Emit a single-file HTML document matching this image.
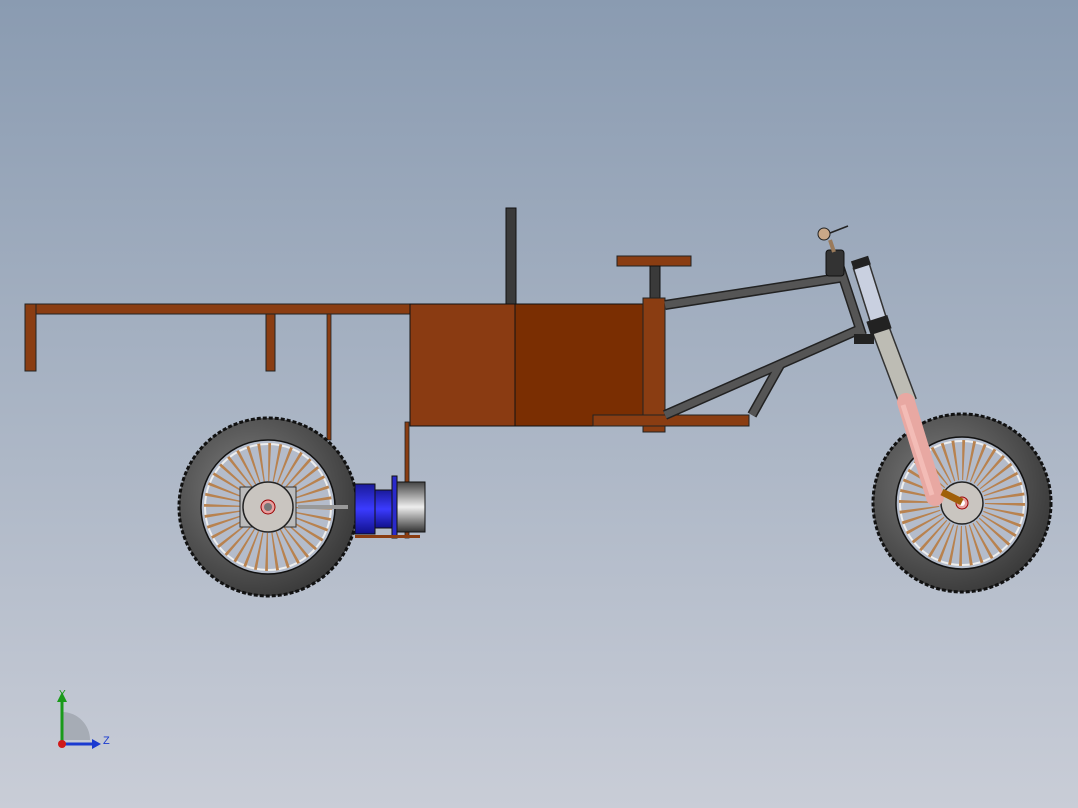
<!DOCTYPE html>
<html><head><meta charset="utf-8"><style>
html,body{margin:0;padding:0;width:1078px;height:808px;overflow:hidden}
body{background:linear-gradient(#8a9bb1 0%,#a9b4c4 50%,#c9cdd7 100%)}
svg{position:absolute;left:0;top:0}
</style></head><body>
<svg width="1078" height="808" viewBox="0 0 1078 808">
<defs>
<radialGradient id="tire" cx="0.4" cy="0.4" r="0.7"><stop offset="0" stop-color="#808080"/><stop offset="1" stop-color="#333"/></radialGradient>
<linearGradient id="blue" x1="0" x2="0" y1="0" y2="1"><stop offset="0" stop-color="#1a1a9a"/><stop offset="0.5" stop-color="#3b3bff"/><stop offset="1" stop-color="#10108a"/></linearGradient>
<linearGradient id="drum" x1="0" x2="0" y1="0" y2="1"><stop offset="0" stop-color="#444"/><stop offset="0.5" stop-color="#eee"/><stop offset="1" stop-color="#333"/></linearGradient>
</defs>

<rect x="25" y="304" width="386" height="10" fill="#8a3d12" stroke="#222" stroke-width="1"/>
<rect x="25" y="304" width="11" height="67" fill="#8a3d12" stroke="#222" stroke-width="1"/>
<rect x="266" y="314" width="9" height="57" fill="#8a3d12" stroke="#222" stroke-width="1"/>
<rect x="327" y="314" width="4" height="126" fill="#8a3d12" stroke="#222" stroke-width="0.8"/>
<rect x="506" y="208" width="10" height="96" fill="#3a3a3a" stroke="#111"/>
<rect x="410" y="304" width="105" height="122" fill="#8a3b12" stroke="#111"/>
<rect x="515" y="304" width="148" height="122" fill="#7a2e02" stroke="#111"/>
<rect x="405" y="422" width="4" height="116" fill="#8a3d12" stroke="#222" stroke-width="0.8"/>
<rect x="617" y="256" width="74" height="10" fill="#8a3d12" stroke="#222"/>
<rect x="650" y="266" width="10" height="34" fill="#3a3a3a" stroke="#111"/>
<rect x="643" y="298" width="22" height="134" fill="#8a3d12" stroke="#222"/>
<rect x="593" y="415" width="156" height="11" fill="#8a3d12" stroke="#222"/>

<g stroke="#222" stroke-width="10">
<line x1="665" y1="305" x2="845" y2="277"/>
<line x1="665" y1="415" x2="858" y2="330"/>
<line x1="752" y1="415" x2="780" y2="365"/>
<line x1="838" y1="262" x2="862" y2="335"/>
</g>
<g stroke="#555" stroke-width="7">
<line x1="665" y1="305" x2="845" y2="277"/>
<line x1="665" y1="415" x2="858" y2="330"/>
<line x1="752" y1="415" x2="780" y2="365"/>
<line x1="838" y1="262" x2="862" y2="335"/>
</g>

<g transform="translate(268,507)">
<circle r="89" fill="url(#tire)" stroke="#111" stroke-width="3" stroke-dasharray="4 2"/>
<circle r="67" fill="#b4bccb" stroke="#111" stroke-width="1.5"/>
<circle r="63" fill="none" stroke="#eee" stroke-width="2"/>
<circle r="45" fill="none" stroke="#b8824f" stroke-width="38" stroke-dasharray="2 5.85"/>
<rect x="-28" y="-20" width="56" height="40" fill="#bbb" stroke="#333"/>
<circle r="25" fill="#c9c5c0" stroke="#222" stroke-width="1.5"/>
<circle r="7" fill="#e8a0a0" stroke="#900"/>
<circle r="4" fill="#777"/>
<rect x="30" y="-2" width="50" height="4" fill="#999"/>
</g>

<rect x="355" y="484" width="20" height="50" fill="url(#blue)" stroke="#111"/>
<rect x="375" y="490" width="18" height="38" fill="url(#blue)" stroke="#111"/>
<rect x="392" y="476" width="5" height="62" fill="#2a2acc" stroke="#111"/>
<rect x="397" y="482" width="28" height="50" fill="url(#drum)" stroke="#111"/>
<rect x="355" y="535" width="65" height="3" fill="#8a3d12"/>

<g transform="translate(962,503)">
<circle r="89" fill="url(#tire)" stroke="#111" stroke-width="3" stroke-dasharray="4 2"/>
<circle r="66" fill="#b4bccb" stroke="#111" stroke-width="1.5"/>
<circle r="62" fill="none" stroke="#eee" stroke-width="2"/>
<circle r="43" fill="none" stroke="#b8824f" stroke-width="40" stroke-dasharray="2 5.5"/>
<circle r="21" fill="#c9c5c0" stroke="#222" stroke-width="1.5"/>
<circle r="6" fill="#e8a0a0" stroke="#900"/>
<circle r="3" fill="#fff"/>
</g>

<line x1="861" y1="265" x2="879" y2="322" stroke="#333" stroke-width="18"/>
<line x1="861" y1="265" x2="879" y2="322" stroke="#c9d0e0" stroke-width="15"/>
<line x1="879" y1="325" x2="908" y2="402" stroke="#333" stroke-width="19"/>
<line x1="879" y1="325" x2="908" y2="402" stroke="#bdbcb4" stroke-width="16"/>
<line x1="906" y1="402" x2="935" y2="497" stroke="#e8a8a2" stroke-width="18" stroke-linecap="round"/>
<line x1="903" y1="405" x2="932" y2="495" stroke="#f3bcb6" stroke-width="5"/>
<rect x="852" y="258" width="18" height="9" fill="#222" transform="rotate(-18 862 263)"/>
<rect x="868" y="318" width="22" height="14" fill="#222" transform="rotate(-18 879 325)"/>
<rect x="854" y="334" width="20" height="10" fill="#222"/>
<rect x="826" y="250" width="18" height="26" rx="3" fill="#333" stroke="#111"/>
<line x1="830" y1="240" x2="834" y2="252" stroke="#9a7a5a" stroke-width="4"/>
<circle cx="824" cy="234" r="6" fill="#c9a888" stroke="#222"/>
<line x1="830" y1="233" x2="848" y2="226" stroke="#222" stroke-width="1.5"/>
<line x1="942" y1="492" x2="962" y2="502" stroke="#a0600a" stroke-width="7"/>

<path d="M62 740 L62 712 A28 28 0 0 1 90 740 Z" fill="#9aa0a8" opacity="0.7"/>
<line x1="62" y1="744" x2="62" y2="700" stroke="#1a9a1a" stroke-width="3"/>
<path d="M57 702 L62 692 L67 702 Z" fill="#1a9a1a"/>
<line x1="62" y1="744" x2="93" y2="744" stroke="#1a3ad0" stroke-width="3"/>
<path d="M92 739 L101 744 L92 749 Z" fill="#1a3ad0"/>
<circle cx="62" cy="744" r="4" fill="#d01a1a"/>
<text x="59" y="697" font-family="Liberation Sans, sans-serif" font-size="10" fill="#1a9a1a">Y</text>
<text x="103" y="744" font-family="Liberation Sans, sans-serif" font-size="11" fill="#1a3ad0">Z</text>
</svg>
</body></html>
